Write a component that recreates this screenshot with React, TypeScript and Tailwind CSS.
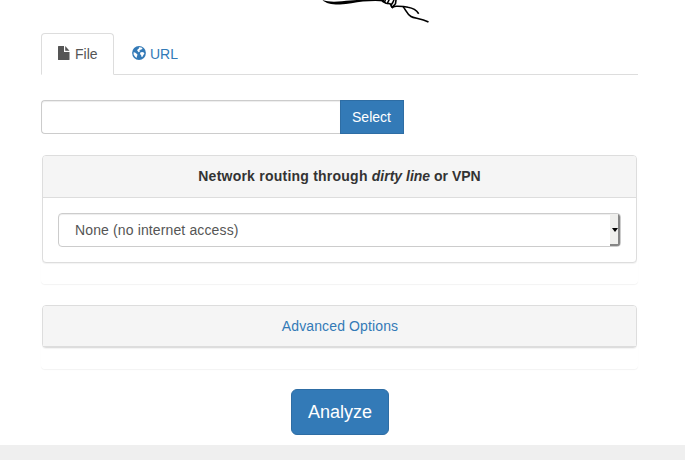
import React from "react";

function Quill() {
  return (
    <svg width="130" height="33" viewBox="310 0 130 33" className="ml-[310px] block" fill="none" stroke="#000">
      <path d="M322.5 0C328 2 335 2 342 1.200C350 .4 356 0 363 -.3H384L384 1.500C377 .5 370 1 363 1.600C355 2.400 348 4.300 340 4.600C332 4.800 326 3.500 322.5 0Z" fill="#000" stroke="none" />
      <path d="M382 1L386 3.300L390 3.700L392 7L396 6.300C401 6.200 405 6.500 408 7.200C413 8 417 11 418.700 13.700" strokeWidth="1.600" />
      <path d="M384 2.500L385.500 0M387 4L389.500 -1M391 5L392.500 3L394 0M393 6.500L395.500 3.700L396 0" strokeWidth="1.600" />
      <path d="M391 5.500L392.500 7.500L394.500 5.500" strokeWidth="1.600" />
      <path d="M403 6.500C406 10 406.500 13.500 411 16.500C414 18.500 421 18 428.500 22" strokeWidth="1.600" />
    </svg>
  );
}

function FileIcon() {
  return (
    <svg width="12" height="14" viewBox="0 0 12 14" className="mr-[5px] -mt-0.5 block" fill="currentColor">
      <path d="M.6 0H6v6h5.500v7.400q0 .6-.6.600H.6Q0 14 0 13.400V.6Q0 0 .6 0ZM7.200 0l4.300 4.700H7.200Z" />
    </svg>
  );
}

function GlobeIcon() {
  return (
    <svg width="14" height="14" viewBox="0 0 14 14" className="mr-1 -mt-0.5 block">
      <circle cx="7" cy="7" r="6.900" fill="#337ab7" />
      <path d="M6.900 1.200L9.500 1.600L10.600 2.700L9.700 3.600L9 3.300L8.200 4.300L7.200 4.700L7.900 5.700L6.700 6.200L5.800 5.200L5.100 4.200L6 3L7 2.600Z" fill="#fff" />
      <path d="M1.600 6.200L3 6.600L4.700 7.700L5.600 8.700L5 9.900L4.500 12L2.900 10.600L1.600 8.600Z" fill="#fff" />
      <path d="M8.300 6.400L10.100 5.900L11.800 6.500L12.400 7.500L11.400 9.100L10.300 11L9.200 10.600L9.200 9L8 8.300Z" fill="#fff" />
    </svg>
  );
}

const groupStyle = "mx-[41px] mt-5 w-[597px] rounded border border-transparent shadow-[0_1px_1px_rgba(0,0,0,0.05)]";
const panelStyle = "w-[595px] rounded border border-[#ddd] bg-white shadow-[0_1px_1px_rgba(0,0,0,0.05)]";

export default function App() {
  return (
    <div className="h-[460px] w-[685px] overflow-hidden bg-white font-['Liberation_Sans',Arial,sans-serif] text-[14px] leading-5 text-[#333]">
      <Quill />
      <nav className="mx-[41px] flex h-[42px] w-[597px] border-b border-[#ddd]">
        <a className="flex h-[42px] w-[73px] shrink-0 items-center rounded-t border border-b-white border-[#ddd] bg-white pl-4 text-[#555]">
          <FileIcon />
          File
        </a>
        <a className="flex h-[42px] items-center pl-[18px] text-[#337ab7]">
          <GlobeIcon />
          URL
        </a>
      </nav>

      <div className="mx-[41px] mt-[25px] flex h-[34px]">
        <input aria-label="File name" className="h-[34px] w-[299px] rounded-l border border-r-0 border-[#ccc] bg-white shadow-[inset_0_1px_1px_rgba(0,0,0,0.075)] outline-none" />
        <button className="h-[34px] w-16 border border-[#2e6da4] bg-[#337ab7] pr-px text-white">Select</button>
      </div>

      <section className={groupStyle + " h-[130px]"}>
        <div className={panelStyle + " h-[108px]"}>
          <div className="flex h-[42px] items-center justify-center rounded-t-[3px] border-b border-[#ddd] bg-[#f5f5f5] pb-px font-bold">
            <span><span className="tracking-[0.23px]">Network routing through </span><em>dirty line</em> or VPN</span>
          </div>
          <div className="p-[15px]">
            <div className="flex h-[34px] items-center overflow-hidden rounded border border-[#ccc] bg-white pl-4 text-[#555] shadow-[inset_0_1px_1px_rgba(0,0,0,0.075)]">
              <span className="flex-1 tracking-[0.13px]">None (no internet access)</span>
              <span className="flex h-8 w-[10px] items-center justify-center border-r-2 border-b-2 border-[#858585] bg-[#efefed]">
                <span className="ml-0.5 mt-px h-0 w-0 border-x-[3px] border-t-[4px] border-x-transparent border-t-black" />
              </span>
            </div>
          </div>
        </div>
      </section>

      <section className={groupStyle + " h-[65px]"}>
        <div className={panelStyle + " h-[43px]"}>
          <div className="flex h-[41px] items-center justify-center rounded-t-[3px] border-b border-[#ddd] bg-[#f5f5f5]">
            <a className="pl-px tracking-[0.13px] text-[#337ab7]">Advanced Options</a>
          </div>
        </div>
      </section>

      <div className="mt-5 flex h-[56px] justify-center pr-[5px]">
        <button className="h-[46px] w-[98px] rounded-md border border-[#2e6da4] bg-[#337ab7] text-[18px] leading-6 text-white">Analyze</button>
      </div>
      <footer className="h-[15px] bg-[#efefef]" />
    </div>
  );
}
